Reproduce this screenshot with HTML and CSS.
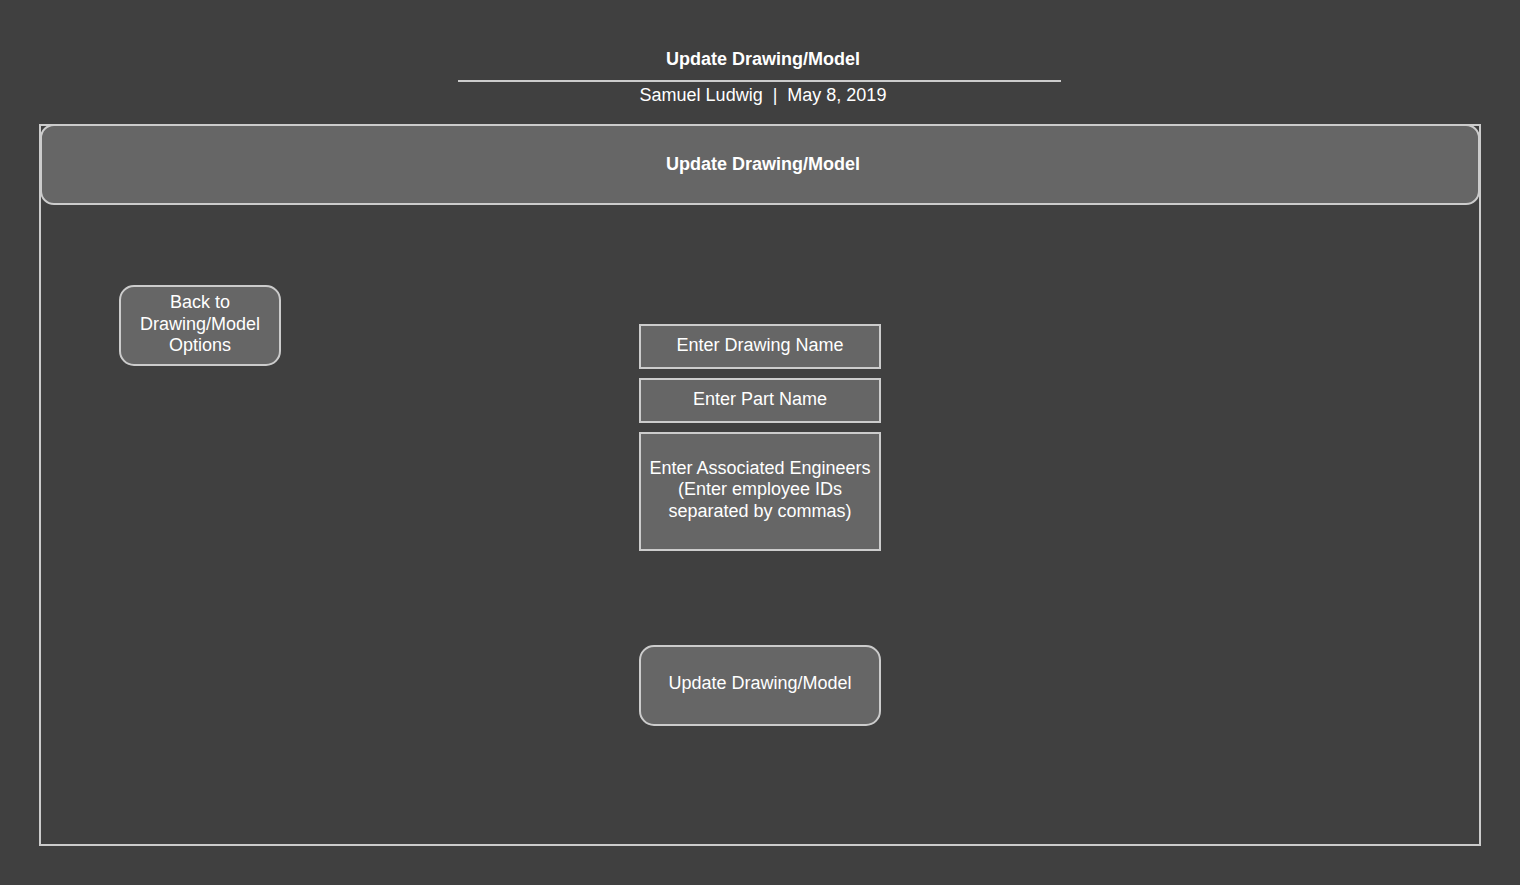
FILE: index.html
```html
<!DOCTYPE html>
<html lang="en">
<head>
<meta charset="utf-8">
<title>Update Drawing/Model</title>
<link rel="stylesheet" href="styles.css">
</head>
<body>
<div class="page">
  <header class="doc-head">
    <h1 class="doc-title">Update Drawing/Model</h1>
    <div class="rule"></div>
    <div class="meta">Samuel Ludwig &nbsp;|&nbsp; May 8, 2019</div>
  </header>
  <section class="frame">
    <div class="frame-bar">Update Drawing/Model</div>
    <div class="frame-body">
      <button class="btn back">Back to<br>Drawing/Model<br>Options</button>
      <div class="form">
        <div class="field">Enter Drawing Name</div>
        <div class="field">Enter Part Name</div>
        <div class="field tall">Enter Associated Engineers<br>(Enter employee IDs<br>separated by commas)</div>
        <button class="btn submit">Update Drawing/Model</button>
      </div>
    </div>
  </section>
</div>
</body>
</html>
```

FILE: styles.css
```css
* { box-sizing: border-box; }
html, body {
  margin: 0;
  padding: 0;
  background: #404040;
}
body {
  font-family: "Liberation Sans", Arial, sans-serif;
  color: #ffffff;
  font-size: 18px;
  line-height: 22px;
}
.page {
  width: 1520px;
  height: 885px;
}
.doc-head {
  padding-top: 48px;
  display: flex;
  flex-direction: column;
  align-items: center;
}
.doc-title {
  margin: 0;
  font-size: 18px;
  line-height: 22px;
  font-weight: bold;
  padding-left: 6px;
}
.rule {
  width: 603px;
  height: 2px;
  background: #cccccc;
  margin-top: 10px;
  margin-left: -1px;
}
.meta {
  margin-top: 2px;
  line-height: 22px;
  padding-left: 6px;
}
.frame {
  margin: 18px 0 0 39px;
  width: 1442px;
  height: 722px;
  border: 2px solid #cccccc;
}
.frame-bar {
  margin: -2px -1px 0 -1px;
  height: 81px;
  border: 2px solid #cccccc;
  border-radius: 14px;
  background: #666666;
  font-weight: bold;
  display: flex;
  align-items: center;
  justify-content: center;
  padding: 0 0 2px 6px;
}
.frame-body {
  display: flex;
  align-items: flex-start;
  padding-left: 78px;
  gap: 358px;
}
.btn {
  font-family: inherit;
  font-size: 18px;
  line-height: 21.6px;
  color: #ffffff;
  background: #666666;
  border: 2px solid #cccccc;
  border-radius: 15px;
  padding: 0;
  display: flex;
  align-items: center;
  justify-content: center;
  text-align: center;
}
.back {
  margin-top: 80px;
  width: 162px;
  height: 81px;
  padding-bottom: 2px;
}
.form {
  margin-top: 119px;
  width: 242px;
  display: flex;
  flex-direction: column;
  gap: 9px;
}
.field {
  height: 45px;
  border: 2px solid #cccccc;
  background: #666666;
  display: flex;
  align-items: center;
  justify-content: center;
  text-align: center;
  line-height: 21.6px;
  padding-bottom: 1px;
}
.field.tall {
  height: 119px;
  padding-bottom: 3px;
}
.submit {
  margin-top: 85px;
  width: 242px;
  height: 81px;
  padding-bottom: 3px;
}
```
